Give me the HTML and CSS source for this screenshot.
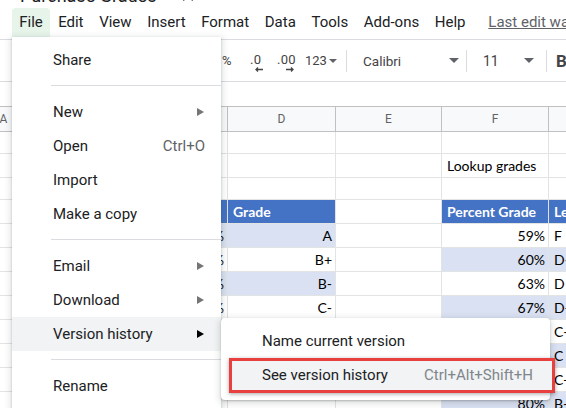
FILE: index.html
```html
<!DOCTYPE html>
<html>
<head>
<meta charset="utf-8">
<link rel="stylesheet" href="styles.css">
</head>
<body>
<div class="app">
  <div class="titlebar">
    <span class="doc-title">Purchase Grades</span>
    <svg class="star" width="16" height="16" viewBox="0 0 24 24"><path d="M12 17.3l6.2 3.7-1.6-7 5.4-4.7-7.2-.6L12 2 9.2 8.6 2 9.2l5.4 4.7-1.6 7z" fill="none" stroke="#5f6368" stroke-width="2"/></svg>
  </div>

  <div class="menubar">
    <span class="mb-item active">File</span>
    <span class="mb-item">Edit</span>
    <span class="mb-item">View</span>
    <span class="mb-item">Insert</span>
    <span class="mb-item">Format</span>
    <span class="mb-item">Data</span>
    <span class="mb-item">Tools</span>
    <span class="mb-item">Add-ons</span>
    <span class="mb-item">Help</span>
    <span class="last-edit">Last edit was seconds ago</span>
  </div>

  <div class="toolbar">
    <span class="tb-pct">%</span>
    <span class="tb-dec tb-dec1"><span class="dec-txt">.0</span><svg width="8" height="5" viewBox="0 0 8 5"><path d="M8 2.5H1.5M3 0.5L1 2.5L3 4.5" fill="none" stroke="#444" stroke-width="1.3"/></svg></span>
    <span class="tb-dec tb-dec2"><span class="dec-txt">.00</span><svg width="8" height="5" viewBox="0 0 8 5"><path d="M0 2.5H6.5M5 0.5L7 2.5L5 4.5" fill="none" stroke="#444" stroke-width="1.3"/></svg></span>
    <span class="tb-num">123<span class="caret small"></span></span>
    <span class="tb-sep"></span>
    <span class="tb-select tb-font"><span>Calibri</span><span class="caret"></span></span>
    <span class="tb-sep"></span>
    <span class="tb-select tb-size"><span>11</span><span class="caret"></span></span>
    <span class="tb-sep"></span>
    <span class="tb-bold">B</span>
  </div>

  <div class="formulabar"></div>

  <div class="grid">
    <div class="ch">A</div><div class="ch">B</div><div class="ch">C</div><div class="ch">D</div><div class="ch">E</div><div class="ch">F</div><div class="ch">G</div>

    <div class="c"></div><div class="c"></div><div class="c"></div><div class="c"></div><div class="c"></div><div class="c"></div><div class="c"></div>

    <div class="c"></div><div class="c"></div><div class="c"></div><div class="c"></div><div class="c"></div><div class="c">Lookup grades</div><div class="c"></div>

    <div class="c"></div><div class="c"></div><div class="c"></div><div class="c"></div><div class="c"></div><div class="c"></div><div class="c"></div>

    <div class="c"></div><div class="c hd">Student</div><div class="c hd">Percent</div><div class="c hd">Grade</div><div class="c"></div><div class="c hd">Percent Grade</div><div class="c hd">Letter Grade</div>

    <div class="c"></div><div class="c lb">Anna</div><div class="c lb r">95%</div><div class="c lb r">A</div><div class="c"></div><div class="c r">59%</div><div class="c">F</div>
    <div class="c"></div><div class="c">Ben</div><div class="c r">88%</div><div class="c r">B+</div><div class="c"></div><div class="c lb r">60%</div><div class="c lb">D-</div>
    <div class="c"></div><div class="c lb">Carla</div><div class="c lb r">81%</div><div class="c lb r">B-</div><div class="c"></div><div class="c r">63%</div><div class="c">D</div>
    <div class="c"></div><div class="c">Dave</div><div class="c r">71%</div><div class="c r">C-</div><div class="c"></div><div class="c lb r">67%</div><div class="c lb">D+</div>
    <div class="c"></div><div class="c lb">Emma</div><div class="c lb r">84%</div><div class="c lb r">B</div><div class="c"></div><div class="c r">70%</div><div class="c">C-</div>
    <div class="c"></div><div class="c">Frank</div><div class="c r">91%</div><div class="c r">A-</div><div class="c"></div><div class="c lb r">73%</div><div class="c lb">C</div>
    <div class="c"></div><div class="c lb">Gina</div><div class="c lb r">78%</div><div class="c lb r">C+</div><div class="c"></div><div class="c r">77%</div><div class="c">C+</div>
    <div class="c"></div><div class="c"></div><div class="c"></div><div class="c"></div><div class="c"></div><div class="c lb r">80%</div><div class="c lb">B-</div>
  </div>

  <div class="menu">
    <div class="m-item">Share</div>
    <div class="m-sep"></div>
    <div class="m-item">New<span class="arrow"></span></div>
    <div class="m-item">Open<span class="shortcut">Ctrl+O</span></div>
    <div class="m-item">Import</div>
    <div class="m-item">Make a copy</div>
    <div class="m-sep"></div>
    <div class="m-item">Email<span class="arrow"></span></div>
    <div class="m-item">Download<span class="arrow"></span></div>
    <div class="m-item hover">Version history<span class="arrow dark"></span></div>
    <div class="m-sep"></div>
    <div class="m-item">Rename</div>
  </div>

  <div class="submenu">
    <div class="m-item">Name current version</div>
    <div class="m-item marked">
      <div class="redbox"></div>
      <span class="lbl">See version history</span>
      <span class="shortcut light">Ctrl+Alt+Shift+H</span>
    </div>
  </div>
</div>
</body>
</html>
```

FILE: styles.css
```css
* { box-sizing: border-box; }
html, body { margin: 0; padding: 0; }
body {
  width: 566px;
  height: 408px;
  overflow: hidden;
  background: #fff;
  font-family: Roboto, "Liberation Sans", Arial, sans-serif;
  color: #202124;
}
.app { position: relative; width: 566px; height: 408px; overflow: hidden; }

.titlebar {
  height: 8px;
  display: flex;
  align-items: flex-start;
  padding-left: 20px;
  white-space: nowrap;
}
.doc-title {
  font-size: 18px;
  line-height: 18px;
  margin-top: -13px;
  color: #202124;
}
.star { margin-top: -14px; margin-left: 24px; }

.menubar {
  height: 32px;
  border-bottom: 1px solid #dadce0;
  display: flex;
  align-items: flex-start;
  padding-left: 12px;
  font-size: 15px;
  white-space: nowrap;
}
.mb-item {
  height: 29px;
  line-height: 29px;
  padding: 0 7.8px;
  color: #202124;
  border-radius: 4px 4px 0 0;
  white-space: nowrap;
  flex-shrink: 0;
}
.mb-item.active { background: #e6f4ea; padding: 0 7.6px 0 7.2px; }
.last-edit {
  margin-left: 15px;
  line-height: 29px;
  color: #5f6368;
  text-decoration: underline;
  white-space: nowrap;
  flex-shrink: 0;
}

.toolbar {
  height: 42px;
  border-bottom: 1px solid #dadce0;
  display: flex;
  align-items: center;
  padding-left: 222px;
  font-size: 13px;
  color: #444;
  white-space: nowrap;
}
.tb-pct { width: 28px; font-size: 13px; flex-shrink: 0; }
.tb-dec {
  display: inline-flex;
  flex-direction: column;
  align-items: flex-start;
  padding-top: 4px;
  flex-shrink: 0;
}
.tb-dec1 { width: 27px; }
.tb-dec2 { width: 28px; }
.dec-txt { font-size: 13px; line-height: 12px; letter-spacing: 0.3px; }
.tb-dec1 svg { margin-left: 5px; margin-top: 1px; }
.tb-dec2 svg { margin-left: 9px; margin-top: 1px; }
.tb-num { width: 41px; display: inline-flex; align-items: center; font-size: 13px; flex-shrink: 0; }
.caret {
  display: inline-block;
  width: 0; height: 0;
  border-left: 5px solid transparent;
  border-right: 5px solid transparent;
  border-top: 5px solid #5f6368;
}
.caret.small { border-left-width: 4px; border-right-width: 4px; border-top-width: 4px; margin-left: 2px; }
.tb-sep { width: 1px; height: 22px; background: #dadce0; flex-shrink: 0; }
.tb-select {
  display: flex;
  align-items: center;
  justify-content: space-between;
  flex-shrink: 0;
}
.tb-font { width: 119px; padding-left: 16px; padding-right: 7px; font-size: 13.5px; }
.tb-size { width: 79px; padding-left: 16px; padding-right: 12px; font-size: 14px; }
.tb-bold { margin-left: 9px; font-weight: 700; font-size: 17px; color: #444; flex-shrink: 0; }

.formulabar { height: 25px; border-bottom: 1px solid #c0c0c0; }

.grid {
  display: grid;
  grid-template-columns: 58px 88px 107px 108px 106px 107px 107px;
  grid-template-rows: 25px 22px 24px 22px 24px repeat(8, 24px);
  margin-left: -25px;
  width: 681px;
  font-family: Lato, "Open Sans", sans-serif;
  font-size: 14px;
  color: #000;
}
.ch {
  background: #f8f9fa;
  border-right: 1px solid #c0c0c0;
  border-bottom: 1px solid #c0c0c0;
  font-family: Roboto, sans-serif;
  font-size: 12px;
  color: #5f6368;
  display: flex;
  align-items: center;
  justify-content: center;
}
.c {
  border-right: 1px solid #e2e3e3;
  border-bottom: 1px solid #e2e3e3;
  padding: 0 3px 0 5px;
  display: flex;
  align-items: center;
  white-space: nowrap;
  overflow: hidden;
}
.c.r { justify-content: flex-end; }
.c.hd { background: #4472c4; color: #fff; font-weight: 700; }
.c.lb { background: #d9e1f2; }

.menu {
  position: absolute;
  left: 12px;
  top: 37px;
  width: 209px;
  height: 400px;
  background: #fff;
  padding-top: 6px;
  border-radius: 0 0 4px 4px;
  box-shadow: 0 2px 6px 2px rgba(60,64,67,.15), 0 1px 2px rgba(60,64,67,.3);
  font-size: 15px;
}
.m-item {
  position: relative;
  height: 34px;
  display: flex;
  align-items: center;
  justify-content: space-between;
  padding: 0 16px 0 41px;
  color: #202124;
  white-space: nowrap;
}
.m-item.hover { background: #f1f3f4; }
.m-sep { height: 1px; background: #dadce0; margin: 8px 0 9px 39px; }
.arrow {
  width: 0; height: 0;
  border-top: 4px solid transparent;
  border-bottom: 4px solid transparent;
  border-left: 7px solid #757575;
  margin-right: 1px;
}
.arrow.dark { border-left-color: #000; }
.shortcut { color: #5f6368; }
.shortcut.light { color: #80868b; }

.submenu {
  position: absolute;
  left: 221px;
  top: 318px;
  width: 329px;
  background: #fff;
  padding: 6px 0 8px;
  border-radius: 4px;
  box-shadow: 0 2px 6px 2px rgba(60,64,67,.15), 0 1px 2px rgba(60,64,67,.3);
  font-size: 15px;
}
.submenu .m-item { padding-right: 17px; }
.m-item.marked .lbl, .m-item.marked .shortcut { position: relative; }
.redbox {
  position: absolute;
  left: 8px;
  right: -5px;
  top: 0;
  bottom: -1px;
  background: #f1f3f4;
  border: 3px solid #e8403f;
  box-shadow: 0 1px 4px rgba(0,0,0,.35);
}
```
